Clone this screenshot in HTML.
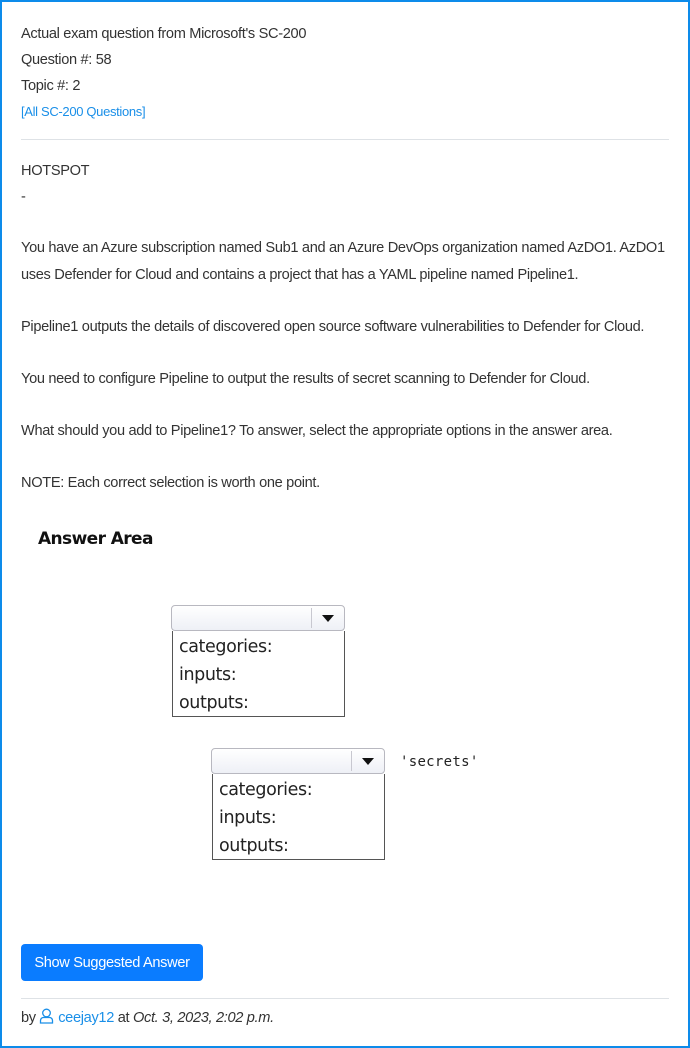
<!DOCTYPE html>
<html><head><meta charset="utf-8"><style>
*{margin:0;padding:0;box-sizing:border-box}
html,body{width:690px;height:1048px;overflow:hidden;background:#fff}
body{position:relative;font-family:"Liberation Sans",sans-serif;color:#333;font-size:14.6px;letter-spacing:-0.33px}
.frame{position:absolute;left:0;top:0;width:690px;height:1048px;border:2px solid #0d8bea}
.t{position:absolute;left:21px;white-space:nowrap;line-height:20px;margin-top:3px}
.a{color:#1a8fe8;font-size:13px}
.hr{position:absolute;left:21px;right:21px;height:1px;background:#dee2e6}
.dd{position:absolute;width:174px;font-family:"DejaVu Sans",sans-serif;letter-spacing:-0.4px}
.sel{height:26px;border:1px solid #b8b8c0;border-radius:4px;background:linear-gradient(#fff,#eef0f6);position:relative}
.sel:after{content:"";position:absolute;right:32px;top:2px;bottom:2px;width:1px;background:#c8c8d0}
.sel i{position:absolute;right:10px;top:9px;border-left:6px solid transparent;border-right:6px solid transparent;border-top:7px solid #111}
.list{border:1px solid #555;border-top:none;margin-left:1px;width:173px;padding:2px 6px 0;height:86px;font-size:17.5px;line-height:28px;color:#222}
.btn{position:absolute;left:21px;top:944px;width:182px;height:37px;background:#0a7cff;border-radius:4px;color:#fff;font-size:14.6px;text-align:center;line-height:39px}
</style></head><body>
<div class="frame"></div>
<div class="t" style="top:21px">Actual exam question from Microsoft's SC-200</div>
<div class="t" style="top:47px">Question #: 58</div>
<div class="t" style="top:73px">Topic #: 2</div>
<div class="t a" style="top:99px">[All SC-200 Questions]</div>
<div class="hr" style="top:139px"></div>
<div class="t" style="top:158px">HOTSPOT</div>
<div class="t" style="top:184px">-</div>
<div class="t" style="top:235px">You have an Azure subscription named Sub1 and an Azure DevOps organization named AzDO1. AzDO1</div>
<div class="t" style="top:262px">uses Defender for Cloud and contains a project that has a YAML pipeline named Pipeline1.</div>
<div class="t" style="top:314px">Pipeline1 outputs the details of discovered open source software vulnerabilities to Defender for Cloud.</div>
<div class="t" style="top:366px">You need to configure Pipeline to output the results of secret scanning to Defender for Cloud.</div>
<div class="t" style="top:418px">What should you add to Pipeline1? To answer, select the appropriate options in the answer area.</div>
<div class="t" style="top:470px">NOTE: Each correct selection is worth one point.</div>
<div style="position:absolute;left:38px;top:529px;font-family:'DejaVu Sans',sans-serif;font-weight:bold;font-size:17px;color:#111;letter-spacing:-0.6px">Answer Area</div>
<div class="dd" style="left:171px;top:605px"><div class="sel"><i></i></div><div class="list">categories:<br>inputs:<br>outputs:</div></div>
<div class="dd" style="left:211px;top:748px"><div class="sel"><i></i></div><div class="list">categories:<br>inputs:<br>outputs:</div></div>
<div style="position:absolute;left:400px;top:754px;font-family:'DejaVu Sans Mono',monospace;font-size:14px;color:#222;letter-spacing:0.3px">'secrets'</div>
<div class="btn">Show Suggested Answer</div>
<div class="hr" style="top:998px"></div>
<div class="t" style="top:1005px">by <svg width="15" height="16" viewBox="0 0 15 16" style="vertical-align:-2px"><circle cx="7.5" cy="5" r="3.8" fill="none" stroke="#1a8fe8" stroke-width="1.3"/><path d="M1.5 15v-2.5a3 3 0 0 1 3-3h6a3 3 0 0 1 3 3V15z" fill="none" stroke="#1a8fe8" stroke-width="1.3"/></svg> <span style="color:#1a8fe8">ceejay12</span> at <i>Oct. 3, 2023, 2:02 p.m.</i></div>
</body></html>
